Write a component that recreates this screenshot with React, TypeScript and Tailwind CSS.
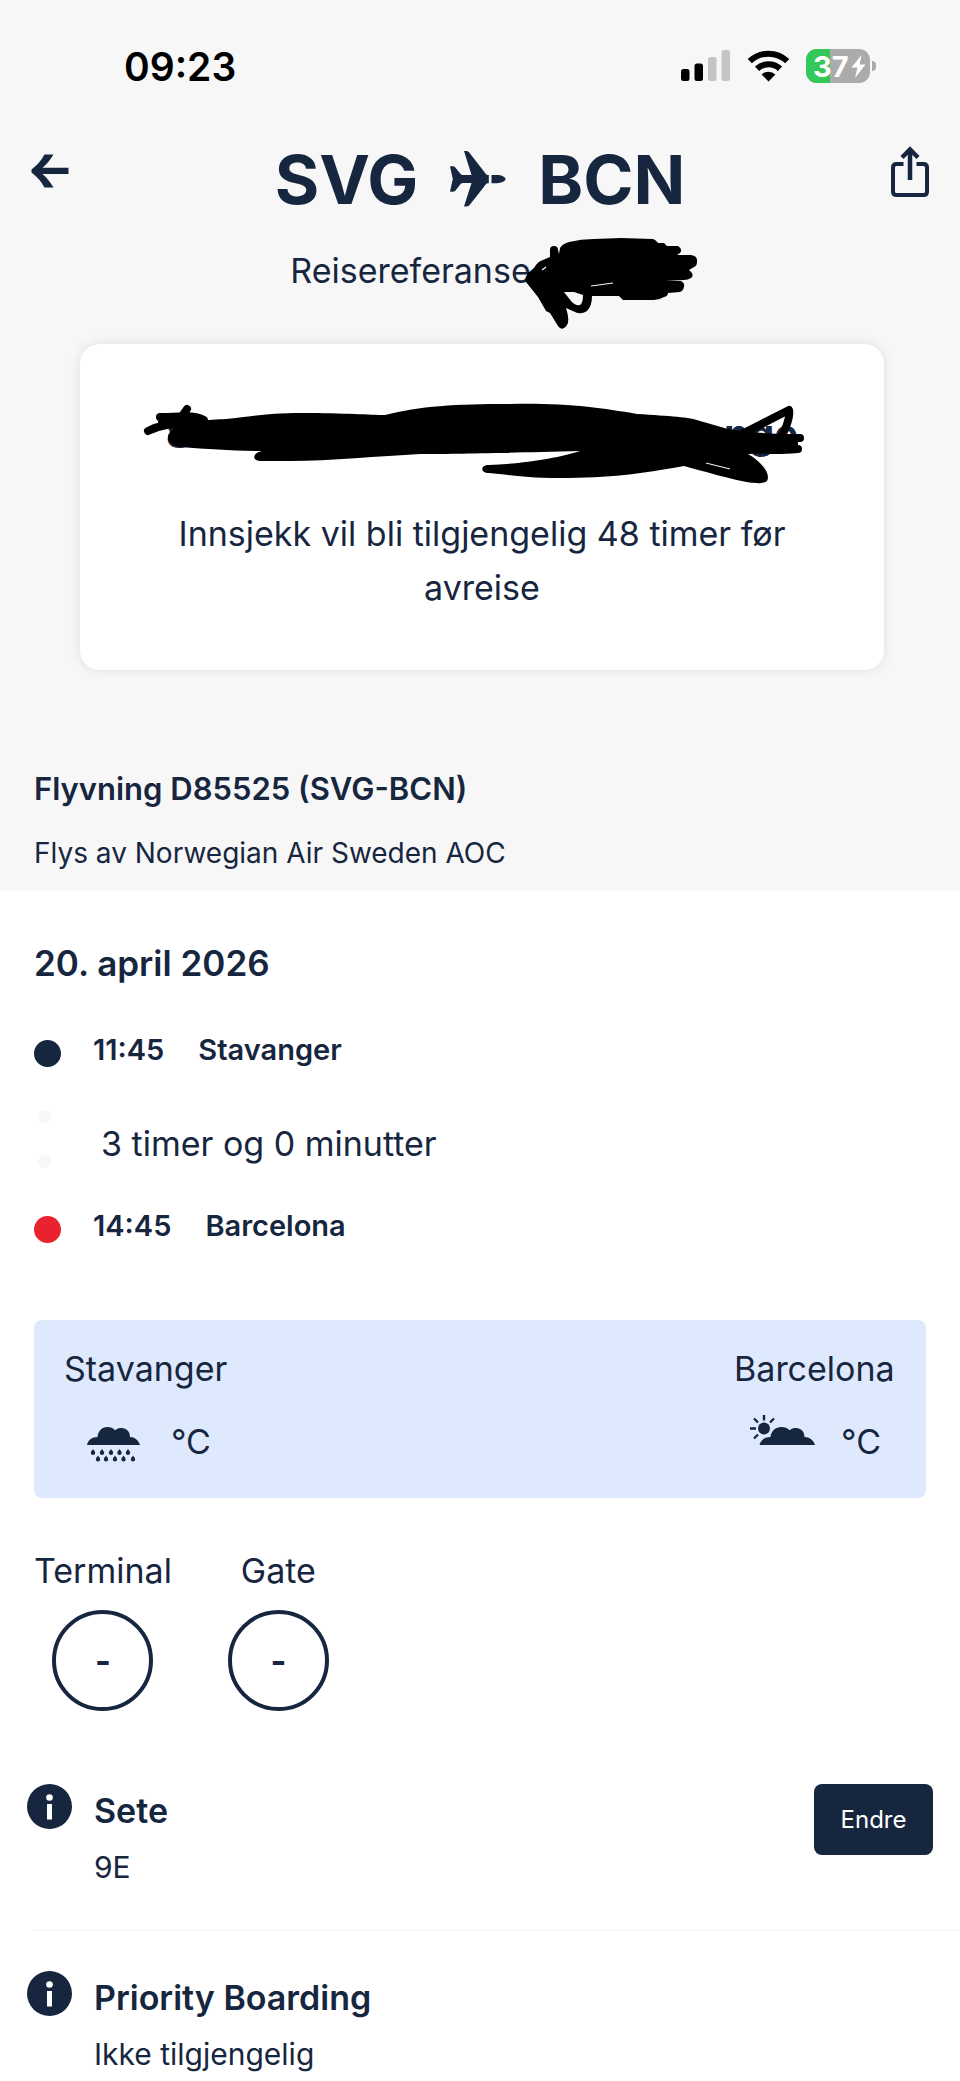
import type { ReactNode } from 'react';

const StatusBar = () => {
  return (
    <div className="flex h-[132px] items-center justify-between pl-[124px] pr-[84px] text-black">
      <span className="text-[39px] font-semibold leading-none">09:23</span>
      <div className="flex items-center">
        {/* Signal */}
        <svg width="49" height="32" viewBox="0 0 49 32" className="mr-[17px]">
          <rect x="0" y="19" width="8.500" height="12" rx="2.500" fill="#000" />
          <rect x="13.500" y="13.500" width="8.500" height="17.500" rx="2.500" fill="#000" />
          <rect x="27" y="7" width="8.500" height="24" rx="2.500" fill="#c4c4c4" />
          <rect x="40.500" y="0" width="8.500" height="31" rx="2.500" fill="#c4c4c4" />
        </svg>
        {/* Wifi */}
        <svg width="43" height="32" viewBox="0 0 43 32" className="mr-4">
          <path d="M2.8 11.2a27 27 0 0 1 37.4 0" fill="none" stroke="#000" strokeWidth="6" />
          <path d="M10 18.8a16.8 16.8 0 0 1 23 0" fill="none" stroke="#000" strokeWidth="6" />
          <path d="M21.5 31.5 14.6 24.4a10 10 0 0 1 13.8 0Z" fill="#000" />
        </svg>
        {/* Battery */}
        <div className="relative flex h-[34px] w-16 items-center overflow-hidden rounded-[11px] bg-[#ababab]">
          <div className="absolute inset-y-0 left-0 w-6 bg-[#34c759]" />
          <span className="relative pl-[7px] text-[29px] font-bold leading-none text-white">37</span>
          <svg width="15" height="23" viewBox="0 0 15 23" className="absolute right-1">
            <path d="M10.5 0 0.5 12.5h6L4 23 14.5 9.5H8.6Z" fill="#fff" />
          </svg>
        </div>
        <div className="ml-0.5 h-2.5 w-1 rounded-r-full bg-[#ababab]" />
      </div>
    </div>
  );
};

const PlaneIcon = () => (
  <svg width="56" height="56" viewBox="0 0 56 56" fill="#17263f" aria-hidden="true">
    <path d="M14 0h1.5c2 0 3.3.5 4.500 2.500L34 20.500c1.500 2 2.500 3.500 3.500 3.500H38.800v8.200H37.500c-1 0-2 1.500-3.500 3.500L20 53.500C18.500 55.500 17 55.500 14 55.500L21.500 32H13.500c-1.500 0-2.500.5-3.300 1.500L5.500 39.500C4.500 40.700 2.500 41 0 40.500L2.800 28 0 15.500c2.500-.5 4.500 0 5.500 1.200l4.700 5.800C11 23.700 12 24 13.500 24h8Z" />
    <path d="M41.500 24H47c4.500 0 8.500 2 8.500 4.100S51.500 32.200 47 32.200h-5.500Z" />
  </svg>
);

const InfoIcon = () => (
  <svg width="45" height="45" viewBox="0 0 45 45" aria-hidden="true">
    <circle cx="22.5" cy="22.5" r="22.5" fill="#17263f" />
    <circle cx="22.5" cy="13.5" r="3.3" fill="#fff" />
    <rect x="20" y="20" width="5" height="15.5" fill="#fff" />
  </svg>
);

const drops = [
  [14, 37], [23, 37], [32, 37], [40.5, 37], [49, 37],
  [19, 43.5], [27, 43.5], [36, 43.5], [44.5, 43.5], [54, 43.5],
];

const RainIcon = () => (
  <svg width="66" height="54" viewBox="0 0 66 54" fill="#17263f" aria-hidden="true">
    <path d="M8 30c1-5 5-8 10.500-8C19 16 23 12 28.500 12c3 0 5.500 1 7.500 3.200C38 13.500 40 13 42.500 13c5 0 8.500 3.500 8.500 9 4.500 0 8.500 3 10 8Z" />
    {drops.map(([x, y]) => (
      <path key={`${x}-${y}`} d={`M${x} ${y - 3}c1.200 1.800 2.200 2.600 2.200 3.700a2.200 2.200 0 0 1-4.400 0c0-1.100 1-1.900 2.200-3.700Z`} />
    ))}
  </svg>
);

const PartlyCloudyIcon = () => (
  <svg width="66" height="54" viewBox="0 0 66 54" fill="#17263f" aria-hidden="true">
    <circle cx="15" cy="13.5" r="6" />
    <path
      d="M15 0v5.5M5 3.5l4 4M1 13.5h6M5 23.5l4-4M25 3.5l-4 4"
      stroke="#17263f"
      strokeWidth="2.4"
      fill="none"
    />
    <path d="M10.500 30c1-5 5.500-8 11-8C22 16 26.500 12 32.500 12c3.500 0 6 1 8 3.200C42.500 13.500 44.500 13 47 13c5 0 8.500 3.500 8.500 9 5 0 9 3 10.500 8Z" />
  </svg>
);

const CityWeather = ({ city, icon }: { city: string; icon: ReactNode }) => (
  <div className="flex flex-col gap-[21px]">
    <span className="text-[34px] leading-[50px]">{city}</span>
    <div className="flex items-center gap-[26px] px-[15px]">
      {icon}
      <span className="text-[34px] leading-[54px]">°C</span>
    </div>
  </div>
);

const Stop = ({ time, city, dot }: { time: string; city: string; dot: string }) => (
  <div className="flex items-start text-[29px] font-semibold leading-[40px]">
    <div className={`mr-8 mt-2.5 size-[27px] rounded-full ${dot}`} />
    <span className="mr-[34px]">{time}</span>
    <span>{city}</span>
  </div>
);

const Place = ({ label, value }: { label: string; value: string }) => (
  <div className="flex flex-col items-center gap-3.5">
    <span className="text-[34px] leading-[50px]">{label}</span>
    <span className="flex size-[101px] items-center justify-center rounded-full border-4 border-[#17263f] text-[34px] font-bold">
      {value}
    </span>
  </div>
);

const Extra = ({ title, value, action }: { title: string; value: string; action?: string }) => (
  <div className="flex items-start px-[27px]">
    <InfoIcon />
    <div className="ml-[22px] mt-1 flex-1">
      <h3 className="text-[34px] font-semibold leading-[46px]">{title}</h3>
      <p className="mt-[13px] text-[30px] leading-[40px]">{value}</p>
    </div>
    {action && (
      <button type="button" className="h-[71px] w-[119px] rounded-lg bg-[#17263f] text-2xl text-white">
        {action}
      </button>
    )}
  </div>
);

const App = () => {
  return (
    <div className="min-h-screen bg-white font-['Inter',sans-serif] text-[#17263f]">
      <header className="bg-[#f7f7f7] pb-[18px]">
        <StatusBar />

        <div className="flex items-start justify-between px-[31px]">
          <button type="button" aria-label="Tilbake" className="flex h-[78px] items-center">
            <svg width="38" height="34" viewBox="0 0 38 34" fill="#17263f">
              <path d="M13.5 0.5H22.5Q17 9.5 11.5 13.7H37.5V20H11.5Q17 24.5 22.5 33.5H13.5Q9 25 0.5 18.5V15.5Q9 9 13.5 0.5Z" />
            </svg>
          </button>
          <h1 className="flex h-[94px] items-center gap-8 text-[68px] font-bold leading-none">
            <span>SVG</span>
            <PlaneIcon />
            <span>BCN</span>
          </h1>
          <button type="button" aria-label="Del" className="flex h-[78px] items-center">
            <svg width="38" height="51" viewBox="0 0 38 51" fill="none" stroke="#17263f" strokeWidth="4">
              <path d="M12.5 18H5.5Q2 18 2 21.5V45.5Q2 49 5.5 49H32.5Q36 49 36 45.5V21.5Q36 18 32.5 18H25.5" />
              <path d="M19 34V4M11 11.5 19 3.5l8 8" strokeWidth="4.5" />
            </svg>
          </button>
        </div>

        <p className="mt-5 flex justify-center text-[34px] leading-[50px]">
          Reisereferanse
          <span className="relative w-[139px]">
            <svg width="176" height="92" viewBox="0 0 176 92" className="absolute -left-1.5 -top-2 max-w-none">
              <path
                d="M35 10Q37 6 44 4Q56 1 69 1L96 0L128 1Q131 2 133 5H139L142 8H153Q158 11 155 15L152 17H166Q173 18 172 24Q172 28 169 29L164 32Q170 37 166 40Q163 42 159 42L141 43H156Q160 45 159 49Q158 53 155 54L143 55Q143 58 139 59Q134 62 129 62H98L94 58H67Q67 68 62 73Q56 77 50 74L41 70Q45 82 42 87Q37 94 33 88L25 75L21 73L13 59L1 44Q-1 41 3 35L9 30Q13 23 18 22L25 19V12Q25 8 29 8Q33 8 33 12L34 16Z"
                fill="#000"
              />
              <path d="M39 54 49 54 58 57Q58 65 55 67Q50 68 46 63Z" fill="#f7f7f7" />
              <path d="m17 32 4-3M66 48 88 45" stroke="#f7f7f7" strokeWidth="1.2" />
            </svg>
          </span>
        </p>

        <div className="relative ml-20 mr-[76px] mt-12 rounded-[20px] bg-white px-20 pb-[55px] pt-[66px] shadow-[0_0_12px_rgba(0,0,0,0.1)]">
          {/* Passenger name, crossed out by hand */}
          <h2 className="flex justify-between px-1.5 text-[40px] font-bold leading-[48px]">
            <span>S</span>
            <span>nge</span>
          </h2>
          <svg viewBox="0 0 804 150" className="absolute inset-x-0 top-0 w-full" aria-hidden="true">
            <path
              d="M94 84C105 76 130 76 146 75C170 73 185 69 222 69C265 69 290 71 305 71C340 62 375 60 430 60C490 59 520 64 557 70C590 72 610 73 620 77L648 85L668 88L700 90L718 92L718 109C695 111 685 109 668 110C682 118 691 130 687 137C680 142 665 139 604 122C560 130 530 134 480 134C440 134 425 130 409 129C400 129 400 121 409 121C440 120 480 114 500 107C420 109 370 110 340 110C300 112 250 117 210 117L180 117C172 117 172 109 182 107C150 107 130 105 100 103C86 100 84 92 94 84Z"
              fill="#000"
            />
            <path
              d="M68 87C90 76 110 82 124 76C110 69 92 74 80 73M82 78H120M100 75 107 65"
              fill="none"
              stroke="#000"
              strokeWidth="8"
              strokeLinecap="round"
              strokeLinejoin="round"
            />
            <path
              d="M650 96 709 66Q711 74 701 94M650 94H720M660 105H718"
              fill="none"
              stroke="#000"
              strokeWidth="8"
              strokeLinecap="round"
              strokeLinejoin="round"
            />
            <path d="m626 119 24 6" stroke="#fff" strokeWidth="1" />
          </svg>
          <p className="mt-[49px] text-center text-[34px] leading-[54px]">
            Innsjekk vil bli tilgjengelig 48 timer før avreise
          </p>
        </div>

        <div className="mt-[95px] px-[34px]">
          <h2 className="text-[31px] font-semibold leading-[48px]">Flyvning D85525 (SVG-BCN)</h2>
          <p className="mt-5 text-[28px] leading-[40px]">Flys av Norwegian Air Sweden AOC</p>
        </div>
      </header>

      <main>
        <section className="px-[34px] pt-12">
          <h2 className="text-[35px] font-semibold leading-[48px]">20. april 2026</h2>

          <div className="mt-[43px]">
            <Stop time="11:45" city="Stavanger" dot="bg-[#17263f]" />
            <div className="mb-[30px] mt-10 flex h-[66px] items-center">
              <div className="ml-1 flex h-full flex-col gap-8">
                <div className="size-[13px] rounded-full bg-[#f7f7f7]" />
                <div className="size-[13px] rounded-full bg-[#f7f7f7]" />
              </div>
              <span className="ml-[50px] text-[34px]">3 timer og 0 minutter</span>
            </div>
            <Stop time="14:45" city="Barcelona" dot="bg-[#e8222e]" />
          </div>

          <div className="mt-[74px] flex justify-between rounded-lg bg-[#dfe9fd] px-[30px] pb-[29px] pt-6">
            <CityWeather city="Stavanger" icon={<RainIcon />} />
            <CityWeather city="Barcelona" icon={<PartlyCloudyIcon />} />
          </div>

          <div className="mt-12 flex gap-14">
            <Place label="Terminal" value="-" />
            <Place label="Gate" value="-" />
          </div>
        </section>

        <section className="mt-[73px]">
          <Extra title="Sete" value="9E" action="Endre" />
          <hr className="mb-10 ml-[34px] mt-[42px] border-t-2 border-[#f7f7f7]" />
          <Extra title="Priority Boarding" value="Ikke tilgjengelig" />
        </section>
      </main>
    </div>
  );
};

export default App;
